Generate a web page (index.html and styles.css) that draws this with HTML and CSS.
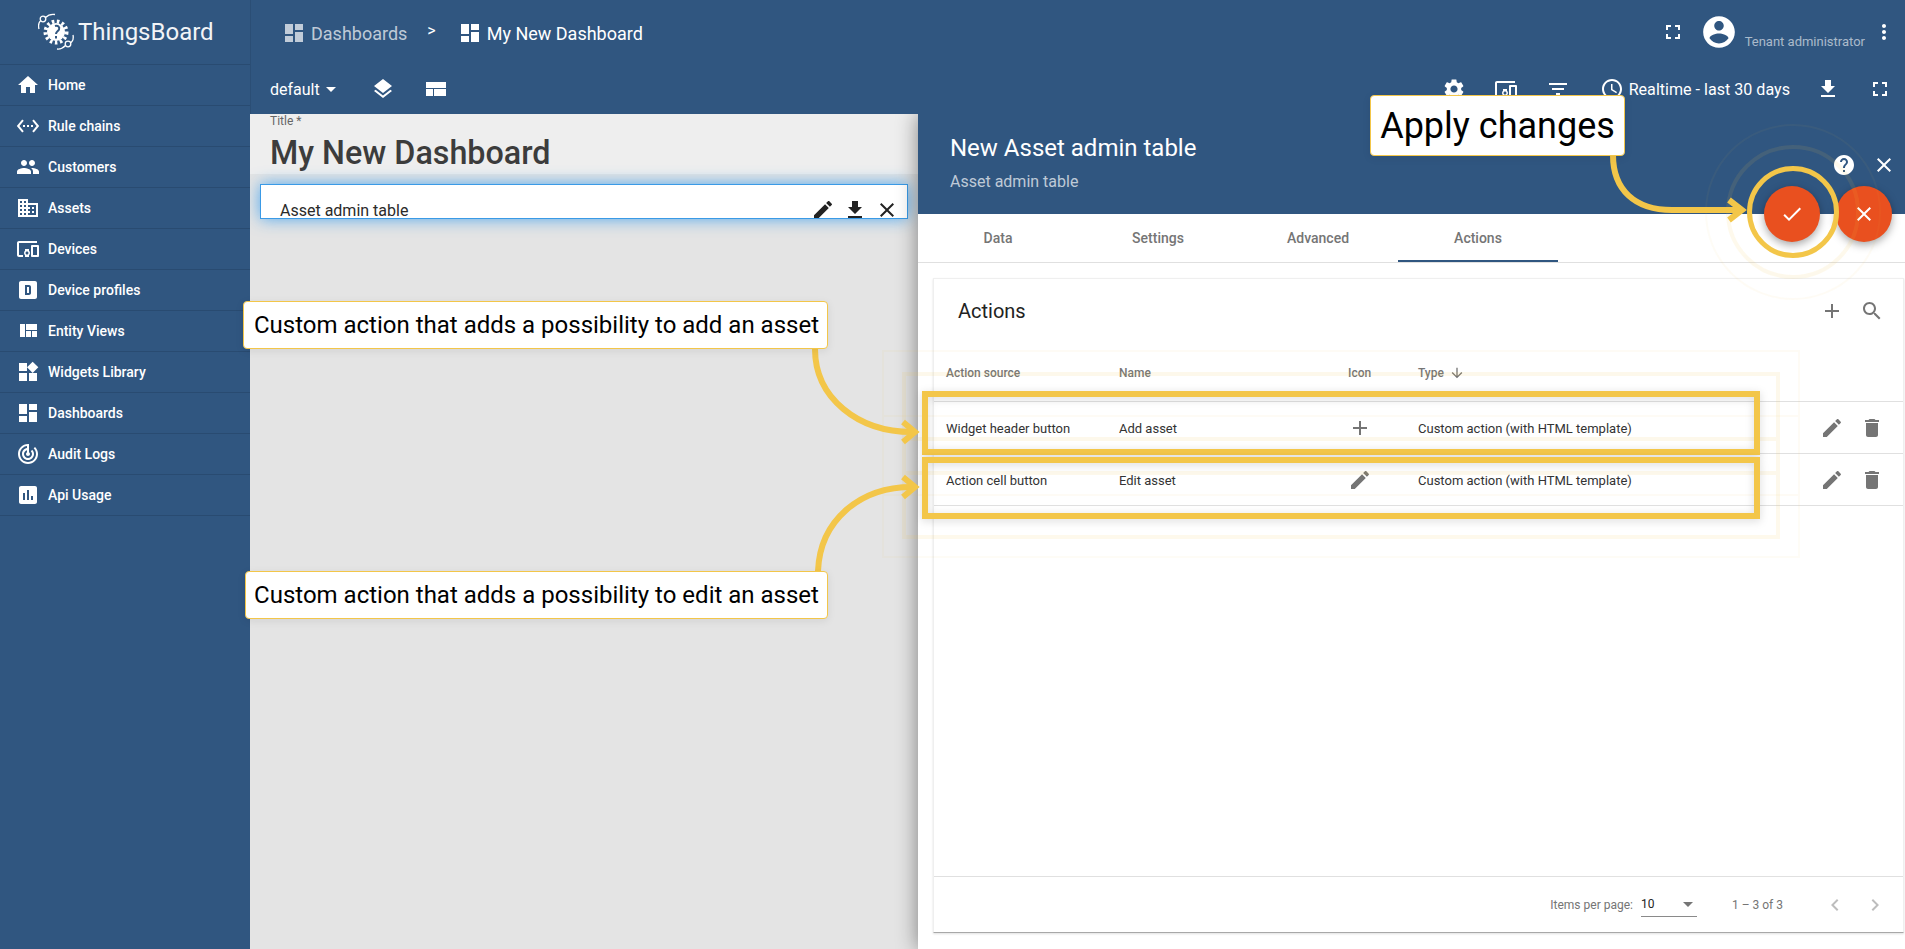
FILE: index.html
```html
<!DOCTYPE html>
<html lang="en">
<head>
    <meta charset="UTF-8">
    <title>ThingsBoard - My New Dashboard</title>
    <link rel="stylesheet" href="styles.css">
</head>
<body>
    <svg class="icon-defs" aria-hidden="true">
        <symbol id="i-home" viewBox="0 0 24 24"><path d="M10 20v-6h4v6h5v-8h3L12 3 2 12h3v8z"/></symbol>
        <symbol id="i-rule" viewBox="0 0 24 24"><path d="M7.77 6.76L6.23 5.48.82 12l5.41 6.52 1.54-1.28L3.42 12l4.35-5.24zM7 13h2v-2H7v2zm10-2h-2v2h2v-2zm-6 2h2v-2h-2v2zm6.77-7.52l-1.54 1.28L20.58 12l-4.35 5.24 1.54 1.28L23.18 12l-5.41-6.52z"/></symbol>
        <symbol id="i-people" viewBox="0 0 24 24"><path d="M16 11c1.66 0 2.99-1.34 2.99-3S17.66 5 16 5c-1.66 0-3 1.34-3 3s1.34 3 3 3zm-8 0c1.66 0 2.99-1.34 2.99-3S9.66 5 8 5C6.34 5 5 6.34 5 8s1.34 3 3 3zm0 2c-2.33 0-7 1.17-7 3.5V19h14v-2.5c0-2.33-4.67-3.5-7-3.5zm8 0c-.29 0-.62.02-.97.05 1.16.84 1.97 1.97 1.97 3.45V19h6v-2.5c0-2.33-4.67-3.5-7-3.5z"/></symbol>
        <symbol id="i-domain" viewBox="0 0 24 24"><path d="M12 7V3H2v18h20V7H12zM6 19H4v-2h2v2zm0-4H4v-2h2v2zm0-4H4V9h2v2zm0-4H4V5h2v2zm4 12H8v-2h2v2zm0-4H8v-2h2v2zm0-4H8V9h2v2zm0-4H8V5h2v2zm10 12h-8v-2h2v-2h-2v-2h2v-2h-2V9h8v10zm-2-8h-2v2h2v-2zm0 4h-2v2h2v-2z"/></symbol>
        <symbol id="i-devices" viewBox="0 0 24 24"><path d="M3 6h18V4H3c-1.1 0-2 .9-2 2v12c0 1.1.9 2 2 2h4v-2H3V6zm10 6H9v1.78c-.61.55-1 1.33-1 2.22s.39 1.67 1 2.22V20h4v-1.78c.61-.55 1-1.34 1-2.22s-.39-1.67-1-2.22V12zm-2 5.5c-.83 0-1.5-.67-1.5-1.5s.67-1.5 1.5-1.5 1.5.67 1.5 1.5-.67 1.5-1.5 1.5zM22 8h-6c-.5 0-1 .5-1 1v10c0 .5.5 1 1 1h6c.5 0 1-.5 1-1V9c0-.5-.5-1-1-1zm-1 10h-4v-8h4v8z"/></symbol>
        <symbol id="i-dbox" viewBox="0 0 24 24"><path fill-rule="evenodd" d="M5 3h14c1.1 0 2 .9 2 2v14c0 1.1-.9 2-2 2H5c-1.1 0-2-.9-2-2V5c0-1.1.9-2 2-2zm4 4v10h4c1.1 0 2-.9 2-2V9c0-1.1-.9-2-2-2H9zm2 2h2v6h-2V9z"/></symbol>
        <symbol id="i-quilt" viewBox="0 0 24 24"><path d="M10 18h5v-6h-5v6zm-6 0h5V5H4v13zm12 0h5v-6h-5v6zM10 5v6h11V5H10z"/></symbol>
        <symbol id="i-widgets" viewBox="0 0 24 24"><path d="M13 13v8h8v-8h-8zM3 21h8v-8H3v8zM3 3v8h8V3H3zm13.66-1.31L11 7.34 16.66 13l5.66-5.66-5.66-5.65z"/></symbol>
        <symbol id="i-dashboard" viewBox="0 0 24 24"><path d="M3 13h8V3H3v10zm0 8h8v-6H3v6zm10 0h8V11h-8v10zm0-18v6h8V3h-8z"/></symbol>
        <symbol id="i-track" viewBox="0 0 24 24"><path d="M19.07 4.93l-1.41 1.41C19.1 7.79 20 9.79 20 12c0 4.42-3.58 8-8 8s-8-3.58-8-8c0-4.08 3.05-7.44 7-7.93v2.02C8.16 6.57 6 9.03 6 12c0 3.31 2.69 6 6 6s6-2.69 6-6c0-1.66-.67-3.16-1.76-4.24l-1.41 1.41C15.55 9.9 16 10.9 16 12c0 2.21-1.79 4-4 4s-4-1.79-4-4c0-1.86 1.28-3.41 3-3.86v2.14c-.6.35-1 .98-1 1.72 0 1.1.9 2 2 2s2-.9 2-2c0-.74-.4-1.38-1-1.72V2h-1C6.48 2 2 6.48 2 12s4.48 10 10 10 10-4.48 10-10c0-2.76-1.12-5.26-2.93-7.07z"/></symbol>
        <symbol id="i-assess" viewBox="0 0 24 24"><path d="M19 3H5c-1.1 0-2 .9-2 2v14c0 1.1.9 2 2 2h14c1.1 0 2-.9 2-2V5c0-1.1-.9-2-2-2zM9 17H7v-7h2v7zm4 0h-2V7h2v10zm4 0h-2v-4h2v4z"/></symbol>
        <symbol id="i-layers" viewBox="0 0 24 24"><path d="M11.99 18.54l-7.37-5.73L3 14.07l9 7 9-7-1.63-1.27-7.38 5.74zM12 16l7.36-5.73L21 9l-9-7-9 7 1.63 1.27L12 16z"/></symbol>
        <symbol id="i-layout" viewBox="0 0 24 24"><path d="M2 5v6h20V5zM2 19h7v-7H2zM10 19h12v-7H10z"/></symbol>
        <symbol id="i-fullscreen" viewBox="0 0 24 24"><path d="M7 14H5v5h5v-2H7v-3zm-2-4h2V7h3V5H5v5zm12 7h-3v2h5v-5h-2v3zM14 5v2h3v3h2V5h-5z"/></symbol>
        <symbol id="i-account" viewBox="0 0 24 24"><path d="M12 2C6.48 2 2 6.48 2 12s4.48 10 10 10 10-4.48 10-10S17.52 2 12 2zm0 3c1.66 0 3 1.34 3 3s-1.34 3-3 3-3-1.34-3-3 1.34-3 3-3zm0 14.2c-2.5 0-4.71-1.28-6-3.22.03-1.99 4-3.08 6-3.08 1.99 0 5.97 1.09 6 3.08-1.29 1.94-3.5 3.22-6 3.22z"/></symbol>
        <symbol id="i-more" viewBox="0 0 24 24"><path d="M12 8c1.1 0 2-.9 2-2s-.9-2-2-2-2 .9-2 2 .9 2 2 2zm0 2c-1.1 0-2 .9-2 2s.9 2 2 2 2-.9 2-2-.9-2-2-2zm0 6c-1.1 0-2 .9-2 2s.9 2 2 2 2-.9 2-2-.9-2-2-2z"/></symbol>
        <symbol id="i-settings" viewBox="0 0 24 24"><path d="M19.14 12.94c.04-.3.06-.61.06-.94 0-.32-.02-.64-.07-.94l2.03-1.58c.18-.14.23-.41.12-.61l-1.92-3.32c-.12-.22-.37-.29-.59-.22l-2.39.96c-.5-.38-1.03-.7-1.62-.94l-.36-2.54c-.04-.24-.24-.41-.48-.41h-3.84c-.24 0-.43.17-.47.41l-.36 2.54c-.59.24-1.13.57-1.62.94l-2.39-.96c-.22-.08-.47 0-.59.22L2.74 8.87c-.12.21-.08.47.12.61l2.03 1.58c-.05.3-.09.63-.09.94s.02.64.07.94l-2.03 1.58c-.18.14-.23.41-.12.61l1.92 3.32c.12.22.37.29.59.22l2.39-.96c.5.38 1.03.7 1.62.94l.36 2.54c.05.24.24.41.48.41h3.84c.24 0 .44-.17.47-.41l.36-2.54c.59-.24 1.13-.56 1.62-.94l2.39.96c.22.08.47 0 .59-.22l1.92-3.32c.12-.22.07-.47-.12-.61l-2.01-1.58zM12 15.6c-1.98 0-3.6-1.62-3.6-3.6s1.62-3.6 3.6-3.6 3.6 1.62 3.6 3.6-1.62 3.6-3.6 3.6z"/></symbol>
        <symbol id="i-filter" viewBox="0 0 24 24"><path d="M10 18h4v-2h-4v2zM3 6v2h18V6H3zm3 7h12v-2H6v2z"/></symbol>
        <symbol id="i-schedule" viewBox="0 0 24 24"><path d="M11.99 2C6.47 2 2 6.48 2 12s4.47 10 9.99 10C17.52 22 22 17.52 22 12S17.52 2 11.99 2zM12 20c-4.42 0-8-3.58-8-8s3.58-8 8-8 8 3.58 8 8-3.58 8-8 8zm.5-13H11v6l5.25 3.15.75-1.23-4.5-2.67z"/></symbol>
        <symbol id="i-download" viewBox="0 0 24 24"><path d="M19 9h-4V3H9v6H5l7 7 7-7zM5 18v2h14v-2H5z"/></symbol>
        <symbol id="i-edit" viewBox="0 0 24 24"><path d="M3 17.25V21h3.75L17.81 9.94l-3.75-3.75L3 17.25zM20.71 7.04c.39-.39.39-1.02 0-1.41l-2.34-2.34c-.39-.39-1.02-.39-1.41 0l-1.83 1.83 3.75 3.75 1.83-1.83z"/></symbol>
        <symbol id="i-close" viewBox="0 0 24 24"><path d="M19 6.41L17.59 5 12 10.59 6.41 5 5 6.41 10.59 12 5 17.59 6.41 19 12 13.41 17.59 19 19 17.59 13.41 12z"/></symbol>
        <symbol id="i-help" viewBox="0 0 24 24"><path d="M12 2C6.48 2 2 6.48 2 12s4.48 10 10 10 10-4.48 10-10S17.52 2 12 2zm1 17h-2v-2h2v2zm2.07-7.75l-.9.92C13.45 12.9 13 13.5 13 15h-2v-.5c0-1.1.45-2.1 1.17-2.83l1.24-1.26c.37-.36.59-.86.59-1.41 0-1.1-.9-2-2-2s-2 .9-2 2H8c0-2.21 1.79-4 4-4s4 1.79 4 4c0 .88-.36 1.68-.93 2.25z"/></symbol>
        <symbol id="i-check" viewBox="0 0 24 24"><path d="M9 16.17L4.83 12l-1.42 1.41L9 19 21 7l-1.41-1.41z"/></symbol>
        <symbol id="i-add" viewBox="0 0 24 24"><path d="M19 13h-6v6h-2v-6H5v-2h6V5h2v6h6v2z"/></symbol>
        <symbol id="i-search" viewBox="0 0 24 24"><path d="M15.5 14h-.79l-.28-.27C15.41 12.59 16 11.11 16 9.5 16 5.91 13.09 3 9.5 3S3 5.91 3 9.5 5.91 16 9.5 16c1.61 0 3.09-.59 4.23-1.57l.27.28v.79l5 4.99L20.49 19l-4.99-5zm-6 0C7.01 14 5 11.99 5 9.5S7.01 5 9.5 5 14 7.01 14 9.5 11.99 14 9.5 14z"/></symbol>
        <symbol id="i-delete" viewBox="0 0 24 24"><path d="M6 19c0 1.1.9 2 2 2h8c1.1 0 2-.9 2-2V7H6v12zM19 4h-3.5l-1-1h-5l-1 1H5v2h14V4z"/></symbol>
        <symbol id="i-arrow-down" viewBox="0 0 24 24"><path d="M20 12l-1.41-1.41L13 16.17V4h-2v12.17l-5.58-5.59L4 12l8 8 8-8z"/></symbol>
        <symbol id="i-prev" viewBox="0 0 24 24"><path d="M15.41 7.41L14 6l-6 6 6 6 1.41-1.41L10.83 12z"/></symbol>
        <symbol id="i-next" viewBox="0 0 24 24"><path d="M10 6L8.59 7.41 13.17 12l-4.58 4.59L10 18l6-6z"/></symbol>
    </svg>

    <div class="app">
        <aside class="sidebar">
            <div class="logo">
                <svg class="logo-mark" viewBox="0 0 38 38">
                    <circle class="logo-gear" cx="18" cy="19" r="10.500"/>
                    <circle cx="18" cy="19" r="9" fill="#fff"/>
                    <path d="M17 13c3-1 5 1 4 3.500-1 2-3 2-3 4.500M18 23v2.500" fill="none" stroke="#305680" stroke-width="2"/>
                    <path class="logo-line" d="M1 16C0 12 1 9 2.800 7.500"/>
                    <circle class="logo-line" cx="5" cy="6" r="2.800"/>
                    <path class="logo-line" d="M7.500 4.500C10 2 14 1 17 1.500"/>
                    <path class="logo-line" d="M35 22c1 4 0 6-2.500 8"/>
                    <circle class="logo-line" cx="30" cy="31" r="2.800"/>
                    <path class="logo-line" d="M27.500 32.500C25 35 22 36.500 19 36"/>
                </svg>
                <span class="logo-text">ThingsBoard</span>
            </div>
            <nav>
                <a class="nav-item"><svg class="icon"><use href="#i-home"/></svg>Home</a>
                <a class="nav-item"><svg class="icon"><use href="#i-rule"/></svg>Rule chains</a>
                <a class="nav-item"><svg class="icon"><use href="#i-people"/></svg>Customers</a>
                <a class="nav-item"><svg class="icon"><use href="#i-domain"/></svg>Assets</a>
                <a class="nav-item"><svg class="icon"><use href="#i-devices"/></svg>Devices</a>
                <a class="nav-item"><svg class="icon"><use href="#i-dbox"/></svg>Device profiles</a>
                <a class="nav-item"><svg class="icon"><use href="#i-quilt"/></svg>Entity Views</a>
                <a class="nav-item"><svg class="icon"><use href="#i-widgets"/></svg>Widgets Library</a>
                <a class="nav-item"><svg class="icon"><use href="#i-dashboard"/></svg>Dashboards</a>
                <a class="nav-item"><svg class="icon"><use href="#i-track"/></svg>Audit Logs</a>
                <a class="nav-item"><svg class="icon"><use href="#i-assess"/></svg>Api Usage</a>
            </nav>
        </aside>

        <main class="main">
            <header class="topbar">
                <div class="crumbs">
                    <svg class="icon dim"><use href="#i-dashboard"/></svg>
                    <span class="crumb dim">Dashboards</span>
                    <span class="crumb-sep">&gt;</span>
                    <svg class="icon"><use href="#i-dashboard"/></svg>
                    <span class="crumb">My New Dashboard</span>
                </div>
                <div class="user-box">
                    <svg class="icon"><use href="#i-fullscreen"/></svg>
                    <svg class="icon avatar"><use href="#i-account"/></svg>
                    <span class="user-role">Tenant administrator</span>
                    <svg class="icon"><use href="#i-more"/></svg>
                </div>
            </header>

            <div class="toolbar">
                <div class="toolbar-left">
                    <span class="state">default</span>
                    <span class="caret"></span>
                    <svg class="icon layers"><use href="#i-layers"/></svg>
                    <svg class="icon layout"><use href="#i-layout"/></svg>
                </div>
                <div class="toolbar-right">
                    <svg class="icon"><use href="#i-settings"/></svg>
                    <svg class="icon"><use href="#i-devices"/></svg>
                    <svg class="icon"><use href="#i-filter"/></svg>
                    <div class="timewindow">
                        <svg class="icon"><use href="#i-schedule"/></svg>
                        <span>Realtime - last 30 days</span>
                    </div>
                    <svg class="icon"><use href="#i-download"/></svg>
                    <svg class="icon"><use href="#i-fullscreen"/></svg>
                </div>
            </div>

            <div class="workspace">
                <section class="canvas">
                    <div class="title-box">
                        <label class="title-label">Title *</label>
                        <div class="title-value">My New Dashboard</div>
                    </div>
                    <div class="widget">
                        <span>Asset admin table</span>
                        <div class="widget-actions">
                            <svg class="icon"><use href="#i-edit"/></svg>
                            <svg class="icon"><use href="#i-download"/></svg>
                            <svg class="icon"><use href="#i-close"/></svg>
                        </div>
                    </div>
                </section>

                <section class="drawer">
                    <div class="drawer-head">
                        <div>
                            <div class="drawer-title">New Asset admin table</div>
                            <div class="drawer-sub">Asset admin table</div>
                        </div>
                        <div class="drawer-tools">
                            <svg class="icon"><use href="#i-help"/></svg>
                            <svg class="icon"><use href="#i-close"/></svg>
                        </div>
                        <div class="fabs">
                            <button class="fab"><svg class="icon"><use href="#i-check"/></svg></button>
                            <button class="fab"><svg class="icon"><use href="#i-close"/></svg></button>
                        </div>
                    </div>

                    <div class="tabs">
                        <div class="tab">Data</div>
                        <div class="tab">Settings</div>
                        <div class="tab">Advanced</div>
                        <div class="tab active">Actions</div>
                    </div>

                    <div class="drawer-body">
                        <div class="card">
                            <div class="card-head">
                                <h2>Actions</h2>
                                <div class="card-tools">
                                    <svg class="icon"><use href="#i-add"/></svg>
                                    <svg class="icon"><use href="#i-search"/></svg>
                                </div>
                            </div>
                            <div class="row row-head">
                                <span>Action source</span>
                                <span>Name</span>
                                <span>Icon</span>
                                <span class="sorted">Type <svg class="icon sort"><use href="#i-arrow-down"/></svg></span>
                            </div>
                            <div class="row">
                                <span>Widget header button</span>
                                <span>Add asset</span>
                                <svg class="icon"><use href="#i-add"/></svg>
                                <span>Custom action (with HTML template)</span>
                                <div class="row-tools">
                                    <svg class="icon"><use href="#i-edit"/></svg>
                                    <svg class="icon"><use href="#i-delete"/></svg>
                                </div>
                            </div>
                            <div class="row">
                                <span>Action cell button</span>
                                <span>Edit asset</span>
                                <svg class="icon"><use href="#i-edit"/></svg>
                                <span>Custom action (with HTML template)</span>
                                <div class="row-tools">
                                    <svg class="icon"><use href="#i-edit"/></svg>
                                    <svg class="icon"><use href="#i-delete"/></svg>
                                </div>
                            </div>
                            <div class="card-fill"></div>
                            <div class="pager">
                                <span>Items per page:</span>
                                <div class="page-size"><span>10</span><i class="page-caret"></i></div>
                                <span class="page-range">1 – 3 of 3</span>
                                <svg class="icon"><use href="#i-prev"/></svg>
                                <svg class="icon"><use href="#i-next"/></svg>
                            </div>
                        </div>
                    </div>
                </section>
            </div>
        </main>
    </div>

    <!-- tutorial annotations drawn over the app -->
    <svg class="marks" viewBox="0 0 1905 949">
        <g class="mark-ghost">
            <rect x="883" y="351" width="916" height="144"/>
            <rect x="883" y="416" width="916" height="141"/>
            <circle cx="1793" cy="212" r="87"/>
        </g>
        <g class="mark-faint">
            <rect x="904" y="374" width="874" height="99"/>
            <rect x="904" y="439" width="874" height="98"/>
            <circle cx="1793" cy="212" r="65"/>
        </g>
        <g class="mark-line">
            <rect class="mark-box" x="925" y="394" width="832" height="58"/>
            <rect class="mark-box" x="925" y="460" width="832" height="56"/>
            <circle class="mark-ring" cx="1793" cy="212" r="43.500"/>
            <path d="M1613 155C1613 190 1635 210 1672 210H1741"/>
            <path d="M1729 200L1742 210 1729 220"/>
            <path d="M815 349C815 398 858 432 912 432"/>
            <path d="M903 422L915 432 903 442"/>
            <path d="M818 571C820 520 860 487 912 487"/>
            <path d="M903 477L915 487 903 497"/>
        </g>
    </svg>
    <div class="callout callout-apply">Apply changes</div>
    <div class="callout callout-add">Custom action that adds a possibility to add an asset</div>
    <div class="callout callout-edit">Custom action that adds a possibility to edit an asset</div>
</body>
</html>
```
FILE: styles.css
```css
* {
    box-sizing: border-box;
}
body {
    margin: 0;
    font-family: Roboto, "Liberation Sans", sans-serif;
    color: #fff;
    background: #305680;
    overflow: hidden;
}
.icon-defs {
    display: none;
}
.icon {
    width: 24px;
    height: 24px;
    flex: none;
    fill: currentColor;
}
.dim {
    color: rgba(255,255,255,0.7);
}
.app {
    display: flex;
    width: 1905px;
    height: 949px;
}

/* sidebar */
.sidebar {
    width: 250px;
    flex: none;
    background: #305680;
}
.logo {
    height: 65px;
    display: flex;
    align-items: center;
    padding-left: 38px;
    gap: 2px;
    border-bottom: 1px solid #294b71;
}
.logo-mark {
    width: 38px;
    height: 38px;
}
.logo-gear {
    fill: none;
    stroke: #fff;
    stroke-width: 4;
    stroke-dasharray: 2.500 2.500;
}
.logo-line {
    fill: none;
    stroke: #fff;
    stroke-width: 1.300;
}
.logo-text {
    font-size: 24px;
    color: #f2f4f7;
}
.nav-item {
    height: 41px;
    display: flex;
    align-items: center;
    gap: 8px;
    padding-left: 16px;
    font-size: 14px;
    font-weight: 500;
    border-bottom: 1px solid #294b71;
}

/* top bars */
.main {
    flex: 1;
    min-width: 0;
    display: flex;
    flex-direction: column;
}
.topbar {
    height: 64px;
    flex: none;
    display: flex;
    align-items: center;
    justify-content: space-between;
    padding: 2px 9px 0 31px;
    border-left: 1px solid #2b4e75;
}
.crumbs {
    display: flex;
    align-items: center;
    font-size: 18px;
}
.crumb {
    margin-left: 5px;
}
.crumb-sep {
    margin: -6px 22px 0 20px;
    font-size: 16px;
}
.user-box {
    display: flex;
    align-items: center;
    margin-top: -2px;
}
.avatar {
    width: 38px;
    height: 38px;
    margin-left: 15px;
}
.user-role {
    font-size: 13px;
    color: rgba(255,255,255,0.6);
    margin: 18px 7px 0 7px;
    white-space: nowrap;
}
.toolbar {
    height: 50px;
    flex: none;
    display: flex;
    align-items: center;
    justify-content: space-between;
    padding: 0 13px 0 19px;
    border-left: 1px solid #2b4e75;
}
.toolbar-left {
    display: flex;
    align-items: center;
}
.state {
    font-size: 16px;
}
.caret {
    margin-left: 6px;
    border: 5px solid transparent;
    border-top-color: #fff;
    border-bottom: 0;
}
.layers {
    margin-left: 35px;
}
.layout {
    margin-left: 29px;
}
.toolbar-right {
    display: flex;
    align-items: center;
    gap: 28px;
}
.timewindow {
    display: flex;
    align-items: center;
    gap: 5px;
    font-size: 16.100px;
    margin-right: -2px;
    margin-left: 2px;
}

/* dashboard canvas */
.workspace {
    flex: 1;
    min-height: 0;
    display: flex;
    overflow: hidden;
}
.canvas {
    width: 668px;
    flex: none;
    background: #e4e4e4;
}
.title-box {
    height: 60px;
    padding: 1px 20px 0;
    background: #eee;
    color: #3c3c3c;
}
.title-label {
    display: block;
    font-size: 12px;
    line-height: 13px;
    color: #666;
}
.title-value {
    font-size: 32.300px;
    font-weight: 500;
    line-height: 50px;
}
.widget {
    height: 35px;
    margin: 10px 10px 0 10px;
    padding: 16px 19px 0;
    display: flex;
    justify-content: space-between;
    background: #fff;
    color: #2a2a2a;
    font-size: 16px;
    line-height: 20px;
    border: 1px solid #3a9ae6;
    box-shadow: 0 0 16px rgba(33,150,243,0.75);
    overflow: hidden;
}
.widget-actions {
    display: flex;
    gap: 8px;
    margin-right: -11px;
    margin-top: -3px;
    color: #222;
}

/* widget drawer */
.drawer {
    flex: 1;
    min-width: 0;
    display: flex;
    flex-direction: column;
    background: #fff;
    box-shadow: 0 0 20px rgba(0,0,0,0.45);
}
.drawer-head {
    position: relative;
    height: 100px;
    flex: none;
    display: flex;
    justify-content: space-between;
    padding: 19px 9px 0 32px;
    background: #305680;
}
.drawer-title {
    font-size: 24px;
    line-height: 30px;
}
.drawer-sub {
    font-size: 16px;
    line-height: 20px;
    margin-top: 9px;
    color: rgba(255,255,255,0.7);
}
.drawer-tools {
    display: flex;
    gap: 16px;
    margin-top: 20px;
}
.fabs {
    position: absolute;
    right: 13px;
    bottom: -28px;
    display: flex;
    gap: 16px;
}
.fab {
    width: 56px;
    height: 56px;
    padding: 0;
    border: 0;
    border-radius: 50%;
    display: flex;
    align-items: center;
    justify-content: center;
    background: #e9501f;
    color: #fff;
    box-shadow: 0 3px 8px rgba(0,0,0,0.35);
}
.tabs {
    height: 49px;
    flex: none;
    display: flex;
    border-bottom: 1px solid #e0e0e0;
}
.tab {
    width: 160px;
    height: 48px;
    display: flex;
    align-items: center;
    justify-content: center;
    font-size: 14px;
    font-weight: 500;
    color: #757575;
}
.tab.active {
    box-shadow: inset 0 -2px 0 #305680;
}
.drawer-body {
    flex: 1;
    min-height: 0;
    display: flex;
    padding: 15px 1px 16px 15px;
}
.card {
    flex: 1;
    min-width: 0;
    display: flex;
    flex-direction: column;
    color: #333;
    border: 1px solid #efefef;
    border-bottom-color: #a8a8a8;
    box-shadow: 0 1px 2px rgba(0,0,0,0.12);
}
.card-head {
    height: 64px;
    flex: none;
    display: flex;
    align-items: center;
    justify-content: space-between;
    padding: 0 19px 0 24px;
}
.card-head h2 {
    margin: 0;
    font-size: 20px;
    font-weight: 400;
    color: #222;
}
.card-tools {
    display: flex;
    gap: 16px;
    color: #757575;
}
.row {
    height: 52px;
    flex: none;
    display: grid;
    grid-template-columns: 173px 229px 70px 1fr 83px;
    align-items: center;
    padding: 1px 0 0 12px;
    font-size: 13px;
    border-bottom: 1px solid #e0e0e0;
}
.row .icon {
    color: #757575;
}
.row-head {
    height: 59px;
    font-size: 12px;
    font-weight: 500;
    color: #757575;
}
.sorted {
    display: flex;
    align-items: center;
    gap: 5px;
}
.row .sort {
    width: 16px;
    height: 16px;
}
.row-tools {
    display: flex;
    gap: 16px;
}
.card-fill {
    flex: 1;
}
.pager {
    height: 56px;
    flex: none;
    display: flex;
    align-items: center;
    justify-content: flex-end;
    padding-right: 16px;
    font-size: 12px;
    color: #757575;
    border-top: 1px solid #e0e0e0;
}
.pager .icon {
    color: #bdbdbd;
    margin-left: 16px;
}
.page-size {
    width: 56px;
    height: 24px;
    margin-left: 8px;
    display: flex;
    align-items: center;
    justify-content: space-between;
    padding-right: 4px;
    color: #222;
    border-bottom: 1px solid #8a8a8a;
}
.page-caret {
    border: 5px solid transparent;
    border-top-color: #757575;
    border-bottom: 0;
}
.page-range {
    margin: 0 24px 0 35px;
}

/* annotations */
.marks {
    position: absolute;
    left: 0;
    top: 0;
    width: 1905px;
    height: 949px;
    fill: none;
    pointer-events: none;
}
.mark-ghost {
    stroke: #f3c649;
    stroke-width: 2;
    opacity: 0.05;
}
.mark-faint {
    stroke: #f3c649;
    stroke-width: 4;
    opacity: 0.1;
}
.mark-line {
    stroke: #f3c649;
    stroke-width: 6;
}
.mark-ring {
    stroke-width: 5;
}
.mark-box {
    stroke-width: 6;
    filter: drop-shadow(0 2px 4px rgba(0,0,0,0.15));
}
.callout {
    position: absolute;
    display: flex;
    align-items: center;
    justify-content: center;
    background: #fff;
    color: #000;
    border: 1px solid #f3c649;
    border-radius: 4px;
    box-shadow: 0 2px 8px rgba(0,0,0,0.08);
    white-space: nowrap;
}
.callout-apply {
    left: 1370px;
    top: 95px;
    width: 255px;
    height: 61px;
    font-size: 36px;
}
.callout-add {
    left: 243px;
    top: 301px;
    width: 585px;
    height: 48px;
    padding-left: 2px;
    font-size: 24px;
}
.callout-edit {
    left: 245px;
    top: 571px;
    width: 583px;
    height: 48px;
    font-size: 24px;
}
```
